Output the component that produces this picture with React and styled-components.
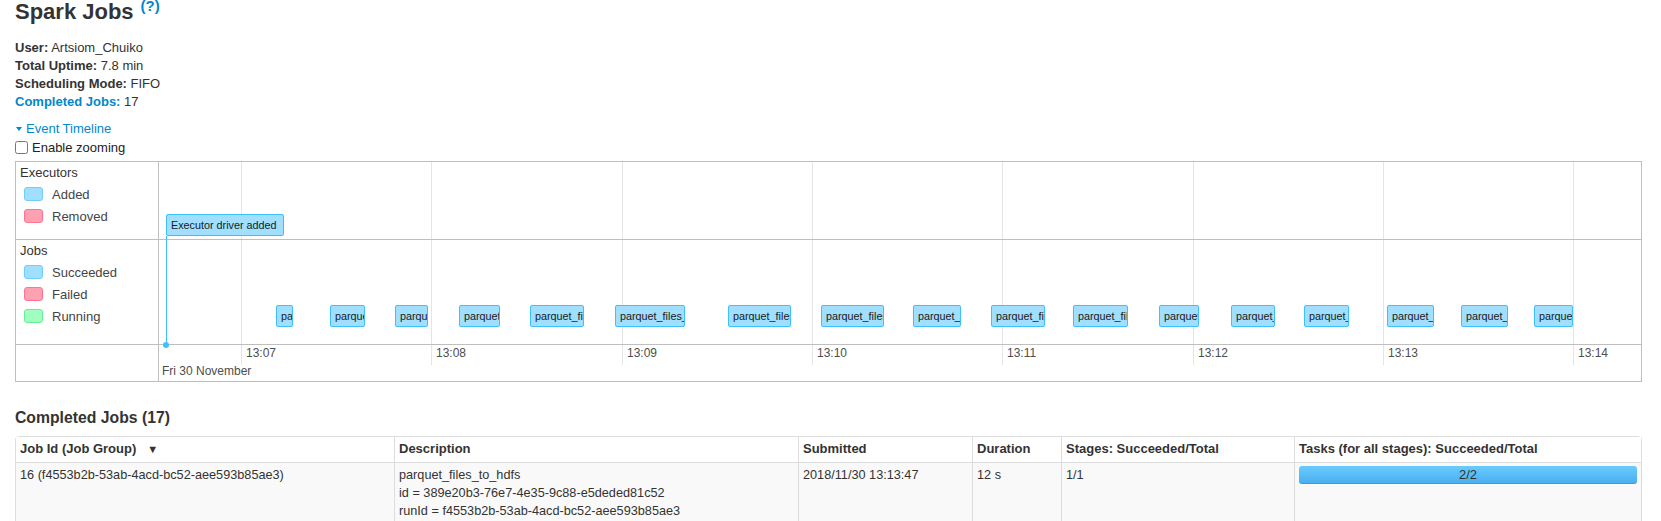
import React from 'react';
import styled, { createGlobalStyle } from 'styled-components';

const GlobalStyle = createGlobalStyle`
  body {
    margin: 0;
    background: #fff;
    color: #333;
    font-family: "Liberation Sans", Arial, sans-serif;
  }
`;

const Page = styled.div`
  padding: 0 19px 0 15px;
`;

const Title = styled.h3`
  margin: 0;
  font-size: 22px;
  line-height: 24px;
  font-weight: bold;
  color: #333;
  sup {
    font-size: 15px;
    line-height: 15px;
    vertical-align: top;
    position: relative;
    top: -2px;
    margin-left: 7px;
    color: #0088cc;
  }
`;

const Details = styled.ul`
  list-style: none;
  margin: 15px 0 0;
  padding: 0;
  font-size: 13px;
  line-height: 18px;
  strong { font-weight: bold; }
  a { color: #0088cc; text-decoration: none; }
`;

const TimelineToggle = styled.a`
  display: flex;
  align-items: center;
  margin-top: 8px;
  height: 18px;
  font-size: 13px;
  color: #0088cc;
  text-decoration: none;
`;

const Caret = styled.span`
  width: 0;
  height: 0;
  margin: 1px 4px 0 1px;
  border-left: 3.5px solid transparent;
  border-right: 3.5px solid transparent;
  border-top: 4px solid #0088cc;
`;

const ZoomRow = styled.label`
  display: flex;
  align-items: center;
  margin-top: 1px;
  height: 18px;
  font-size: 13px;
  color: #222;
  input {
    margin: 0 4px 0 0;
    width: 13px;
    height: 13px;
  }
`;

const Timeline = styled.div`
  margin-top: 5px;
  border: 1px solid #bfbfbf;
`;

const TRow = styled.div`
  display: grid;
  grid-template-columns: 143px 1fr;
  height: ${p => p.$h}px;
  border-bottom: ${p => (p.$last ? 'none' : '1px solid #bfbfbf')};
`;

const GroupCell = styled.div`
  border-right: 1px solid #bfbfbf;
  padding-left: 4px;
  font-size: 13px;
  color: #333;
`;

const GroupTitle = styled.div`
  line-height: 21px;
`;

const LegendItem = styled.div`
  display: flex;
  align-items: center;
  gap: 9px;
  height: 22px;
  padding-left: 4px;
  color: #444;
`;

const Swatch = styled.span`
  box-sizing: border-box;
  width: 19px;
  height: 14px;
  border-radius: 3px;
  border: 1px solid ${p => p.$stroke};
  background: ${p => p.$fill};
`;

const Canvas = styled.div`
  position: relative;
`;

const GridLine = styled.div`
  position: absolute;
  top: 0;
  width: 1px;
  height: ${p => (p.$h ? `${p.$h}px` : '100%')};
  background: #e5e5e5;
`;

const Item = styled.div`
  position: absolute;
  box-sizing: border-box;
  height: 22px;
  padding: 0 ${p => (p.$auto ? '6px' : '4px')} 0 4px;
  border: 1px solid #3ec0ff;
  border-radius: 2px;
  background: #a0dfff;
  color: #1a1a1a;
  font-size: 10.8px;
  line-height: 20px;
  white-space: nowrap;
  overflow: hidden;
  z-index: 2;
`;

const Connector = styled.div`
  position: absolute;
  width: 1px;
  background: #3ec0ff;
  z-index: 3;
`;

const Dot = styled.div`
  position: absolute;
  width: 6px;
  height: 6px;
  border-radius: 50%;
  background: #3ec0ff;
  z-index: 3;
`;

const AxisLabel = styled.div`
  position: absolute;
  font-size: 12px;
  line-height: 16px;
  color: #4d4d4d;
  white-space: nowrap;
`;

const SectionTitle = styled.h4`
  margin: 26px 0 0;
  font-size: 15.75px;
  line-height: 20px;
  font-weight: bold;
  color: #333;
`;

const Table = styled.table`
  margin-top: 8px;
  width: 100%;
  table-layout: fixed;
  border-collapse: separate;
  border-spacing: 0;
  border: 1px solid #ddd;
  border-radius: 4px;
  font-size: 12.7px;
  line-height: 18px;
  th, td {
    text-align: left;
    vertical-align: top;
    padding: 3px 4px 4px;
    border-left: 1px solid #ddd;
  }
  th:first-child, td:first-child { border-left: none; }
  th {
    font-size: 13px;
    font-weight: bold;
    border-bottom: 1px solid #ddd;
    background: #fff;
  }
  td { background: #f9f9f9; }
`;

const SortArrow = styled.span`
  margin-left: 11px;
  font-size: 11px;
`;

const Progress = styled.div`
  height: 18px;
  border-radius: 3px;
  background: linear-gradient(to bottom, #68cbff, #4aaeee);
  box-shadow: inset 0 -1px 0 rgba(0, 0, 0, 0.12);
  text-align: center;
  font-size: 13px;
  line-height: 18px;
  color: #333;
`;

const MIN = 190.33;
const gridX = k => Math.round(82 + MIN * k);
const ticks = ['13:07', '13:08', '13:09', '13:10', '13:11', '13:12', '13:13', '13:14'];

const jobs = [
  [117, 17], [171, 35], [236, 33], [300, 41], [371, 54], [456, 70],
  [569, 63], [662, 63], [754, 48], [832, 54], [914, 55], [1000, 40],
  [1072, 44], [1145, 45], [1228, 47], [1302, 47], [1375, 39],
];

const legendColors = {
  blue: ['#a0dfff', '#6fcdff'],
  red: ['#ffa1b0', '#ff7590'],
  green: ['#a0ffc0', '#66f096'],
};

function Legend({ color, children }) {
  const [fill, stroke] = legendColors[color];
  return (
    <LegendItem>
      <Swatch $fill={fill} $stroke={stroke} />
      {children}
    </LegendItem>
  );
}

function Grid({ h }) {
  return ticks.map((t, k) => <GridLine key={t} $h={h} style={{ left: gridX(k) }} />);
}

export default function App() {
  return (
    <Page>
      <GlobalStyle />
      <Title>
        Spark Jobs<sup>(?)</sup>
      </Title>
      <Details>
        <li><strong>User:</strong> Artsiom_Chuiko</li>
        <li><strong>Total Uptime:</strong> 7.8 min</li>
        <li><strong>Scheduling Mode:</strong> FIFO</li>
        <li><a href="#completed"><strong>Completed Jobs:</strong></a> 17</li>
      </Details>

      <TimelineToggle href="#timeline">
        <Caret />
        Event Timeline
      </TimelineToggle>
      <ZoomRow>
        <input type="checkbox" />
        Enable zooming
      </ZoomRow>

      <Timeline>
        <TRow $h={77}>
          <GroupCell>
            <GroupTitle>Executors</GroupTitle>
            <Legend color="blue">Added</Legend>
            <Legend color="red">Removed</Legend>
          </GroupCell>
          <Canvas>
            <Grid />
            <Item $auto style={{ left: 7, top: 52 }}>Executor driver added</Item>
            <Connector style={{ left: 7, top: 74, height: 109 }} />
            <Dot style={{ left: 4, top: 180 }} />
          </Canvas>
        </TRow>
        <TRow $h={104}>
          <GroupCell>
            <GroupTitle>Jobs</GroupTitle>
            <Legend color="blue">Succeeded</Legend>
            <Legend color="red">Failed</Legend>
            <Legend color="green">Running</Legend>
          </GroupCell>
          <Canvas>
            <Grid />
            {jobs.map(([left, width], i) => (
              <Item key={i} style={{ left, width, top: 65 }}>parquet_files_to_hdfs</Item>
            ))}
          </Canvas>
        </TRow>
        <TRow $h={36} $last>
          <GroupCell />
          <Canvas>
            <Grid h={20} />
            {ticks.map((t, k) => (
              <AxisLabel key={t} style={{ left: gridX(k) + 5, top: 0 }}>{t}</AxisLabel>
            ))}
            <AxisLabel style={{ left: 3, top: 18 }}>Fri 30 November</AxisLabel>
          </Canvas>
        </TRow>
      </Timeline>

      <SectionTitle id="completed">Completed Jobs (17)</SectionTitle>
      <Table>
        <colgroup>
          <col style={{ width: 378 }} />
          <col style={{ width: 404 }} />
          <col style={{ width: 174 }} />
          <col style={{ width: 89 }} />
          <col style={{ width: 233 }} />
          <col />
        </colgroup>
        <thead>
          <tr>
            <th>Job Id (Job Group)<SortArrow>▼</SortArrow></th>
            <th>Description</th>
            <th>Submitted</th>
            <th>Duration</th>
            <th>Stages: Succeeded/Total</th>
            <th>Tasks (for all stages): Succeeded/Total</th>
          </tr>
        </thead>
        <tbody>
          <tr>
            <td>16 (f4553b2b-53ab-4acd-bc52-aee593b85ae3)</td>
            <td>
              parquet_files_to_hdfs<br />
              id = 389e20b3-76e7-4e35-9c88-e5deded81c52<br />
              runId = f4553b2b-53ab-4acd-bc52-aee593b85ae3
            </td>
            <td>2018/11/30 13:13:47</td>
            <td>12 s</td>
            <td>1/1</td>
            <td><Progress>2/2</Progress></td>
          </tr>
        </tbody>
      </Table>
    </Page>
  );
}
